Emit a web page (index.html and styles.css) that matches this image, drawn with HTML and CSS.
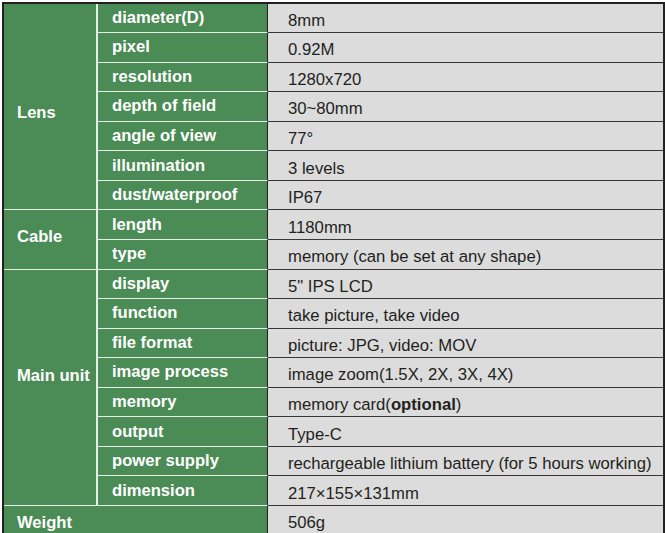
FILE: index.html
```html
<!DOCTYPE html>
<html>
<head>
<meta charset="utf-8">
<link rel="stylesheet" href="styles.css">
</head>
<body>
<div class="spec">
  <div class="grp lens">Lens</div>
  <div class="key">diameter(D)</div><div class="val">8mm</div>
  <div class="key">pixel</div><div class="val">0.92M</div>
  <div class="key">resolution</div><div class="val">1280x720</div>
  <div class="key">depth of field</div><div class="val">30~80mm</div>
  <div class="key">angle of view</div><div class="val">77°</div>
  <div class="key">illumination</div><div class="val">3 levels</div>
  <div class="key">dust/waterproof</div><div class="val">IP67</div>

  <div class="grp cable">Cable</div>
  <div class="key">length</div><div class="val">1180mm</div>
  <div class="key">type</div><div class="val">memory (can be set at any shape)</div>

  <div class="grp main">Main unit</div>
  <div class="key">display</div><div class="val">5" IPS LCD</div>
  <div class="key">function</div><div class="val">take picture, take video</div>
  <div class="key">file format</div><div class="val">picture: JPG, video: MOV</div>
  <div class="key">image process</div><div class="val">image zoom(1.5X, 2X, 3X, 4X)</div>
  <div class="key">memory</div><div class="val">memory card(<b>optional</b>)</div>
  <div class="key">output</div><div class="val">Type-C</div>
  <div class="key">power supply</div><div class="val">rechargeable lithium battery (for 5 hours working)</div>
  <div class="key">dimension</div><div class="val">217×155×131mm</div>

  <div class="grp weight">Weight</div><div class="val">506g</div>
</div>
</body>
</html>
```

FILE: styles.css
```css
html, body {
  margin: 0;
  padding: 0;
  overflow: hidden;
  background: #ffffff;
}

.spec {
  margin: 2px 0 0 2px;
  width: 663px;
  box-sizing: border-box;
  border: 2px solid #231f20;
  border-bottom: none;
  display: grid;
  grid-template-columns: 94px 170px 395px;
  grid-template-rows: 29px repeat(17, 29.5625px);
  font-family: "Liberation Sans", Arial, sans-serif;
  background: #4b8b55;
}

.grp,
.key {
  background: #4b8b55;
  color: #ffffff;
  font-weight: bold;
  font-size: 16.6px;
  display: flex;
  align-items: center;
  box-sizing: border-box;
  border-bottom: 1px solid #e4eee4;
}

.grp {
  grid-column: 1;
  padding-left: 13px;
  border-right: 2px solid #e4eee4;
}

.lens { grid-row: span 7; padding-top: 12px; }
.cable { grid-row: span 2; padding-bottom: 5px; }
.main { grid-row: span 8; padding-bottom: 22px; }
.weight { grid-column: 1 / span 2; border-right: 1px solid #231f20; padding-top: 5px; }

.key {
  grid-column: 2;
  padding-left: 14px;
  border-right: 1px solid #231f20;
}

.val {
  grid-column: 3;
  background: #dcdcdc;
  color: #231f20;
  font-size: 16.7px;
  display: flex;
  align-items: center;
  padding-left: 20px;
  padding-top: 6px;
  box-sizing: border-box;
  border-bottom: 1px solid #3a3536;
  white-space: nowrap;
}

.val b {
  font-weight: bold;
}
```
